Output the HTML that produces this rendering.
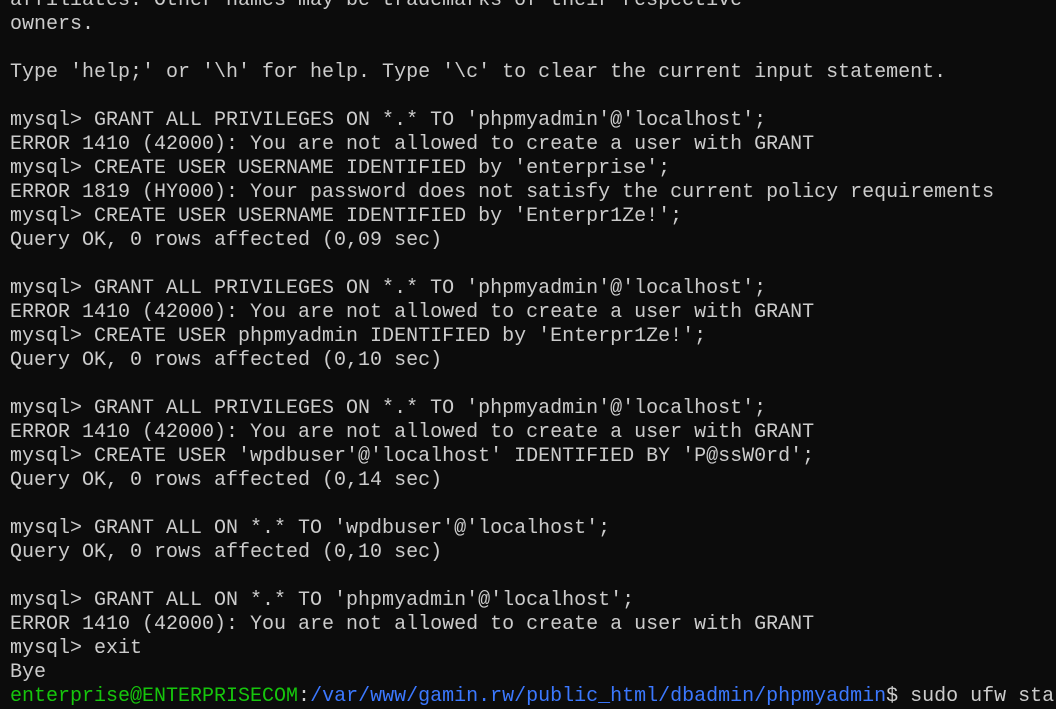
<!DOCTYPE html>
<html><head><meta charset="utf-8"><style>
html,body{margin:0;padding:0;background:#0c0c0c;width:1056px;height:697px;overflow:hidden}
pre{margin:0;position:absolute;left:10px;top:-11px;font-family:"Liberation Mono",monospace;font-size:20px;line-height:24px;color:#cccccc;white-space:pre}
.g{color:#16c60c}.b{color:#3b78ff}
</style></head><body><pre>affiliates. Other names may be trademarks of their respective
owners.

Type 'help;' or '\h' for help. Type '\c' to clear the current input statement.

mysql&gt; GRANT ALL PRIVILEGES ON *.* TO 'phpmyadmin'@'localhost';
ERROR 1410 (42000): You are not allowed to create a user with GRANT
mysql&gt; CREATE USER USERNAME IDENTIFIED by 'enterprise';
ERROR 1819 (HY000): Your password does not satisfy the current policy requirements
mysql&gt; CREATE USER USERNAME IDENTIFIED by 'Enterpr1Ze!';
Query OK, 0 rows affected (0,09 sec)

mysql&gt; GRANT ALL PRIVILEGES ON *.* TO 'phpmyadmin'@'localhost';
ERROR 1410 (42000): You are not allowed to create a user with GRANT
mysql&gt; CREATE USER phpmyadmin IDENTIFIED by 'Enterpr1Ze!';
Query OK, 0 rows affected (0,10 sec)

mysql&gt; GRANT ALL PRIVILEGES ON *.* TO 'phpmyadmin'@'localhost';
ERROR 1410 (42000): You are not allowed to create a user with GRANT
mysql&gt; CREATE USER 'wpdbuser'@'localhost' IDENTIFIED BY 'P@ssW0rd';
Query OK, 0 rows affected (0,14 sec)

mysql&gt; GRANT ALL ON *.* TO 'wpdbuser'@'localhost';
Query OK, 0 rows affected (0,10 sec)

mysql&gt; GRANT ALL ON *.* TO 'phpmyadmin'@'localhost';
ERROR 1410 (42000): You are not allowed to create a user with GRANT
mysql&gt; exit
Bye
<span class="g">enterprise@ENTERPRISECOM</span>:<span class="b">/var/www/gamin.rw/public_html/dbadmin/phpmyadmin</span>$ sudo ufw status</pre></body></html>
